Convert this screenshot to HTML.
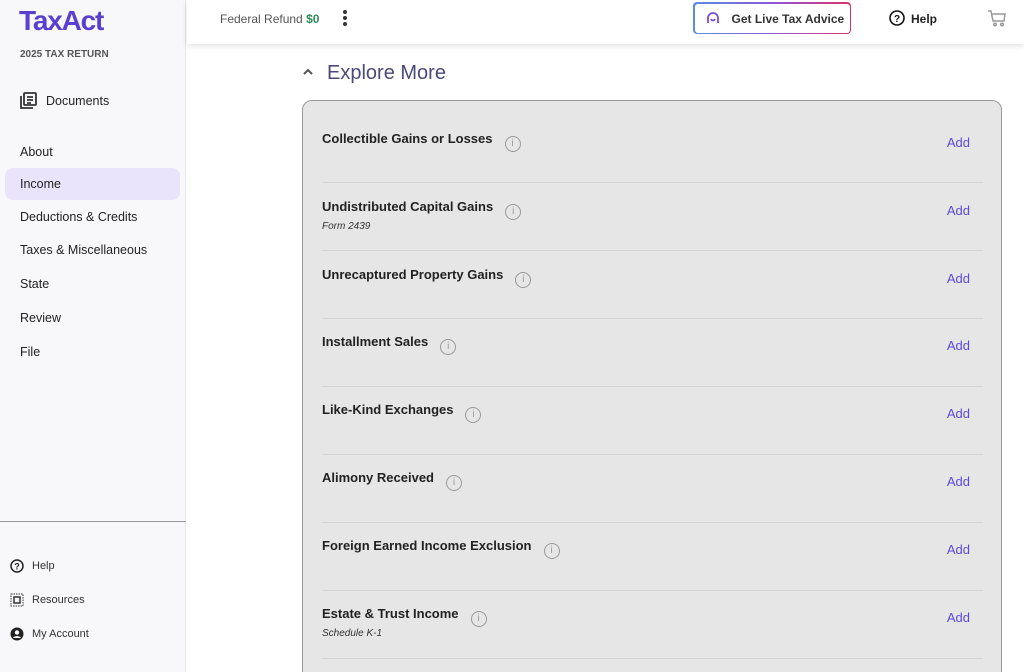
<!DOCTYPE html>
<html style="overflow:hidden;height:672px"><head><style>
*{box-sizing:border-box;margin:0;padding:0}
body{width:1024px;height:672px;overflow:hidden;background:#fff;font-family:"Liberation Sans",sans-serif;position:relative}
.side{position:absolute;left:0;top:0;width:186px;height:672px;background:#f8f8fb;border-right:1px solid #e6e6ec}
.logo{position:absolute;left:19px;top:5px;font-size:28px;font-weight:bold;color:#5a3fd0;letter-spacing:-1.2px}
.yr{position:absolute;left:20px;top:49px;font-size:10px;font-weight:bold;color:#555}
.nav{position:absolute;left:20px;font-size:12.5px;color:#222}
.sel{position:absolute;left:5px;top:168px;width:175px;height:32px;background:#e9e4fb;border-radius:8px}
.hr{position:absolute;left:0;top:521px;width:186px;border-top:1px solid #999}
.bn{position:absolute;left:32px;font-size:11px;color:#333}
.bi{position:absolute;left:10px}
.top{position:absolute;left:187px;top:0;right:0;height:44px;background:#fff;box-shadow:0 2px 6px rgba(0,0,0,.12)}
.panel{position:absolute;left:302px;top:100px;width:700px;height:600px;background:#e6e6e6;border:1px solid #999;border-radius:10px}
.row{position:absolute;left:19px;width:661px;height:68px;border-bottom:1px solid #d4d4d4}
.t{position:absolute;left:0;font-size:13px;font-weight:bold;color:#222}
.s{position:absolute;left:0;font-size:10px;font-style:italic;color:#333}
.add{position:absolute;right:13px;font-size:13px;color:#5b4ad8}
.i{display:inline-block;width:16px;height:16px;border:1.3px solid #999;border-radius:50%;color:#999;font-size:10px;text-align:center;line-height:14px;font-weight:normal;margin-left:12px;vertical-align:-3px}
</style></head><body>
<div class="side">
<div class="logo">TaxAct</div>
<div class="yr">2025 TAX RETURN</div>
<svg style="position:absolute;left:19px;top:92px" width="18" height="18" viewBox="0 0 18 18" fill="none" stroke="#333" stroke-width="1.8"><path d="M2 4v12h12"/><rect x="5" y="1" width="12" height="12" rx="1"/><path d="M8 5h6M8 8h6M8 11h4"/></svg>
<div class="nav" style="left:46px;top:94px">Documents</div>
<div class="sel"></div>
<div class="nav" style="top:145px">About</div>
<div class="nav" style="top:177px">Income</div>
<div class="nav" style="top:210px">Deductions &amp; Credits</div>
<div class="nav" style="top:243px">Taxes &amp; Miscellaneous</div>
<div class="nav" style="top:277px">State</div>
<div class="nav" style="top:311px">Review</div>
<div class="nav" style="top:345px">File</div>
<div class="hr"></div>
<svg class="bi" style="top:559px" width="14" height="14" viewBox="0 0 14 14"><circle cx="7" cy="7" r="6" fill="none" stroke="#222" stroke-width="1.5"/><text x="7" y="10.5" font-size="9" font-weight="bold" text-anchor="middle" fill="#222" font-family="Liberation Sans">?</text></svg>
<div class="bn" style="top:560px">Help</div>
<svg class="bi" style="top:593px" width="14" height="14" viewBox="0 0 14 14" fill="none" stroke="#333"><rect x="1" y="1" width="12" height="12" stroke-dasharray="1.5 1"/><rect x="4" y="4" width="6" height="6" stroke-width="1.5"/></svg>
<div class="bn" style="top:594px">Resources</div>
<svg class="bi" style="top:627px" width="14" height="14" viewBox="0 0 14 14"><circle cx="7" cy="7" r="6.5" fill="#222"/><circle cx="7" cy="5.5" r="2.2" fill="#fff"/><path d="M3 11c1-2.5 7-2.5 8 0" fill="#fff"/></svg>
<div class="bn" style="top:628px">My Account</div>
</div>
<div class="top">
<div style="position:absolute;left:33px;top:12px;font-size:12px;color:#555">Federal Refund <b style="color:#2a8a5a">$0</b></div>
<div style="position:absolute;left:156px;top:10px;width:4px">
<div style="width:4px;height:4px;border-radius:2px;background:#333;margin-bottom:2px"></div><div style="width:4px;height:4px;border-radius:2px;background:#333;margin-bottom:2px"></div><div style="width:4px;height:4px;border-radius:2px;background:#333"></div></div>
<div style="position:absolute;left:506px;top:2px;width:158px;height:32px;border-radius:4px;padding:1.5px;background:linear-gradient(90deg,#5b8de0,#8a5ad8,#e0306a)"><div style="background:#fff;width:100%;height:100%;border-radius:3px;font-size:12px;font-weight:bold;color:#333;padding:8px 0 0 37px">Get Live Tax Advice</div></div>
<svg style="position:absolute;left:519px;top:11px" width="14" height="14" viewBox="0 0 14 14" fill="none" stroke="#7a4fd8" stroke-width="1.8"><path d="M2 12V7a5 5 0 0110 0v5"/><path d="M5 8c1 2 3 2 4 0"/></svg>
<svg style="position:absolute;left:702px;top:10px" width="16" height="16" viewBox="0 0 16 16"><circle cx="8" cy="8" r="7" fill="none" stroke="#111" stroke-width="1.6"/><text x="8" y="12" font-size="10" font-weight="bold" text-anchor="middle" fill="#111" font-family="Liberation Sans">?</text></svg>
<div style="position:absolute;left:724px;top:12px;font-size:12px;font-weight:bold;color:#222">Help</div>
<svg style="position:absolute;left:800px;top:9px" width="20" height="18" viewBox="0 0 20 18" fill="none" stroke="#999" stroke-width="1.5"><path d="M1 2h3l2 10h11l1-7H5"/><circle cx="8" cy="15.5" r="1.3"/><circle cx="15" cy="15.5" r="1.3"/></svg>
</div>
<svg style="position:absolute;left:302px;top:67px" width="12" height="10" viewBox="0 0 12 10" fill="none" stroke="#555" stroke-width="2"><path d="M2 7l4-4 4 4"/></svg>
<div style="position:absolute;left:327px;top:62px;font-size:20px;color:#4a4a7a">Explore More</div>
<div class="panel">
<div class="row" style="top:14px"><div class="t" style="top:16px">Collectible Gains or Losses<span class="i">i</span></div><div class="add" style="top:20px">Add</div></div>
<div class="row" style="top:82px"><div class="t" style="top:16px">Undistributed Capital Gains<span class="i">i</span></div><div class="s" style="top:38px">Form 2439</div><div class="add" style="top:20px">Add</div></div>
<div class="row" style="top:150px"><div class="t" style="top:16px">Unrecaptured Property Gains<span class="i">i</span></div><div class="add" style="top:20px">Add</div></div>
<div class="row" style="top:218px"><div class="t" style="top:15px">Installment Sales<span class="i">i</span></div><div class="add" style="top:19px">Add</div></div>
<div class="row" style="top:286px"><div class="t" style="top:15px">Like-Kind Exchanges<span class="i">i</span></div><div class="add" style="top:19px">Add</div></div>
<div class="row" style="top:354px"><div class="t" style="top:15px">Alimony Received<span class="i">i</span></div><div class="add" style="top:19px">Add</div></div>
<div class="row" style="top:422px"><div class="t" style="top:15px">Foreign Earned Income Exclusion<span class="i">i</span></div><div class="add" style="top:19px">Add</div></div>
<div class="row" style="top:490px"><div class="t" style="top:15px">Estate &amp; Trust Income<span class="i">i</span></div><div class="s" style="top:37px">Schedule K-1</div><div class="add" style="top:19px">Add</div></div>
</div>
</body></html>
